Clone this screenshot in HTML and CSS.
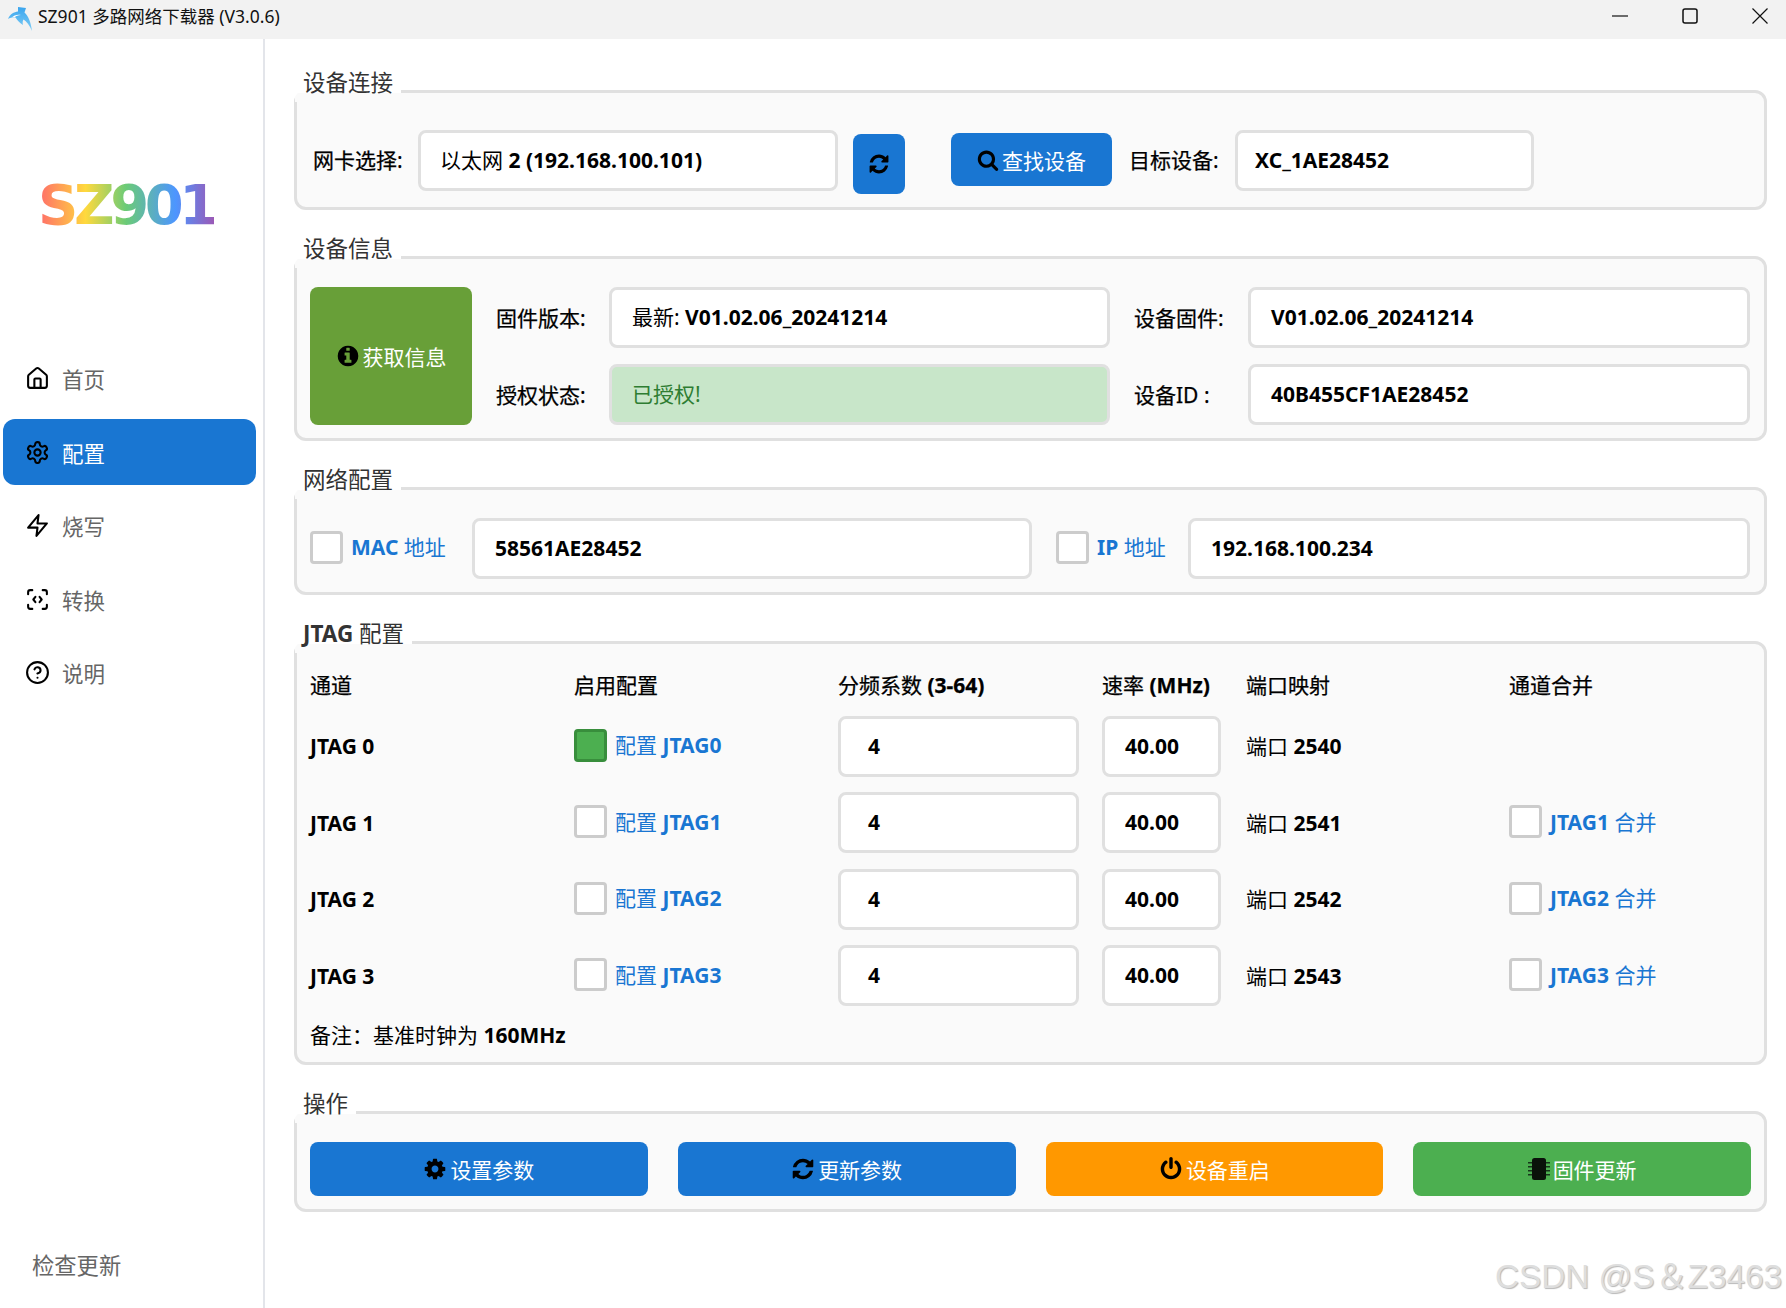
FILE: index.html
```html
<!DOCTYPE html>
<html lang="zh-CN">
<head>
<meta charset="utf-8">
<title>SZ901 多路网络下载器 (V3.0.6)</title>
<link rel="stylesheet" href="styles.css">
</head>
<body>
<div class="window">
  <header class="titlebar">
    <svg class="app-icon" viewBox="0 0 32 32"><defs><linearGradient id="dolphin" x1="0" y1="0" x2="0" y2="1"><stop offset="0" stop-color="#3aa5ee"/><stop offset="1" stop-color="#7fcdf5"/></linearGradient></defs><path fill="url(#dolphin)" d="M6 16C8 11 12 9 16 8.500L16 4L24 5L22.500 9.500C26.500 13 29 20 30 28C27.500 22 24.500 18.500 21.500 16.500C20.500 18 20.500 20 21 22C18 20.500 15.500 17.500 13.500 14.500C11 14 8 15 6 16Z"/><path fill="#fff" d="M9 15c3-3 7-4 10-3-3 0-5 1-6 2-1 0-3 0-4 1z"/></svg>
    <span class="title-text">SZ901 多路网络下载器 (V3.0.6)</span>
    <div class="win-controls">
      <svg class="win-btn" viewBox="0 0 16 16"><path d="M0 8h16" stroke="#111" stroke-width="1.2"/></svg>
      <svg class="win-btn" viewBox="0 0 16 16"><rect x="1" y="1" width="14" height="14" rx="2" fill="none" stroke="#111" stroke-width="1.5"/></svg>
      <svg class="win-btn" viewBox="0 0 16 16"><path d="M.5.5l15 15M15.500.5l-15 15" stroke="#111" stroke-width="1.2"/></svg>
    </div>
  </header>
  <div class="body">
    <aside class="sidebar">
      <div class="logo"><span class="logo-text">SZ901</span></div>
      <nav class="nav">
        <a class="nav-item"><svg class="nav-icon" viewBox="0 0 24 24"><path d="M15 21v-8a1 1 0 0 0-1-1h-4a1 1 0 0 0-1 1v8"/><path d="M3 10a2 2 0 0 1 .709-1.528l7-5.999a2 2 0 0 1 2.582 0l7 5.999A2 2 0 0 1 21 10v9a2 2 0 0 1-2 2H5a2 2 0 0 1-2-2z"/></svg>首页</a>
        <a class="nav-item active"><svg class="nav-icon" viewBox="0 0 24 24"><path d="M12.220 2h-.44a2 2 0 0 0-2 2v.18a2 2 0 0 1-1 1.730l-.43.25a2 2 0 0 1-2 0l-.15-.08a2 2 0 0 0-2.730.73l-.22.38a2 2 0 0 0 .73 2.730l.15.1a2 2 0 0 1 1 1.720v.51a2 2 0 0 1-1 1.740l-.15.09a2 2 0 0 0-.73 2.730l.22.38a2 2 0 0 0 2.730.73l.15-.08a2 2 0 0 1 2 0l.43.25a2 2 0 0 1 1 1.730V20a2 2 0 0 0 2 2h.44a2 2 0 0 0 2-2v-.18a2 2 0 0 1 1-1.730l.43-.25a2 2 0 0 1 2 0l.15.08a2 2 0 0 0 2.730-.73l.22-.39a2 2 0 0 0-.73-2.730l-.15-.08a2 2 0 0 1-1-1.740v-.5a2 2 0 0 1 1-1.740l.15-.09a2 2 0 0 0 .73-2.730l-.22-.38a2 2 0 0 0-2.730-.73l-.15.08a2 2 0 0 1-2 0l-.43-.25a2 2 0 0 1-1-1.730V4a2 2 0 0 0-2-2z"/><circle cx="12" cy="12" r="3"/></svg>配置</a>
        <a class="nav-item"><svg class="nav-icon" viewBox="0 0 24 24"><path d="M13 2 3 14h9l-1 8 10-12h-9l1-8z"/></svg>烧写</a>
        <a class="nav-item"><svg class="nav-icon" viewBox="0 0 24 24"><path d="M3 7V5a2 2 0 0 1 2-2h2M17 3h2a2 2 0 0 1 2 2v2M21 17v2a2 2 0 0 1-2 2h-2M7 21H5a2 2 0 0 1-2-2v-2M10 9.500 8 12l2 2.500M14 9.500l2 2.500-2 2.500"/></svg>转换</a>
        <a class="nav-item"><svg class="nav-icon" viewBox="0 0 24 24"><circle cx="12" cy="12" r="10"/><path d="M9.090 9a3 3 0 0 1 5.830 1c0 2-3 3-3 3M12 17h.01"/></svg>说明</a>
      </nav>
      <div class="check-update">检查更新</div>
    </aside>
    <main class="main">
      <fieldset class="group g-conn">
        <legend>设备连接</legend>
        <div class="conn-row">
          <span class="label lbl-nic">网卡选择:</span>
          <div class="field f-nic"><span class="zh">以太网</span> <b>2 (192.168.100.101)</b></div>
          <button class="btn btn-blue btn-refresh"><svg class="fa" viewBox="0 0 1792 1792"><path d="M1639 1056q0 5-1 7-64 268-268 434.500t-478 166.500q-146 0-282.500-55t-243.500-157l-129 129q-19 19-45 19t-45-19-19-45v-448q0-26 19-45t45-19h448q26 0 45 19t19 45-19 45l-137 137q71 66 161 102t187 36q134 0 250-65t186-179q11-17 53-117 8-23 30-23h192q13 0 22.500 9.500t9.500 22.500zm25-800v448q0 26-19 45t-45 19h-448q-26 0-45-19t-19-45 19-45l138-138q-148-137-349-137-134 0-250 65t-186 179q-11 17-53 117-8 23-30 23h-199q-13 0-22.500-9.500t-9.500-22.500v-7q65-268 270-434.500t480-166.500q146 0 284 55.500t245 156.500l130-129q19-19 45-19t45 19 19 45z"/></svg></button>
          <button class="btn btn-blue btn-find"><svg class="fa" viewBox="0 0 1792 1792"><path d="M1216 832q0-185-131.500-316.500t-316.500-131.500-316.500 131.500-131.500 316.500 131.500 316.500 316.500 131.500 316.500-131.500 131.500-316.500zm512 832q0 52-38 90t-90 38q-54 0-90-38l-343-342q-179 124-399 124-143 0-273.500-55.500t-225-150-150-225-55.500-273.500 55.500-273.500 150-225 225-150 273.500-55.500 273.500 55.500 225 150 150 225 55.500 273.500q0 220-124 399l343 343q37 37 37 90z"/></svg>查找设备</button>
          <span class="label lbl-target">目标设备:</span>
          <div class="field f-target"><b>XC_1AE28452</b></div>
        </div>
      </fieldset>

      <fieldset class="group g-info">
        <legend>设备信息</legend>
        <div class="info-grid">
          <button class="btn btn-olive info-btn"><svg class="fa fa-lg" viewBox="0 0 1792 1792"><path d="M1152 1376v-160q0-14-9-23t-23-9h-96v-512q0-14-9-23t-23-9h-320q-14 0-23 9t-9 23v160q0 14 9 23t23 9h96v320h-96q-14 0-23 9t-9 23v160q0 14 9 23t23 9h448q14 0 23-9t9-23zm-128-896v-160q0-14-9-23t-23-9h-192q-14 0-23 9t-9 23v160q0 14 9 23t23 9h192q14 0 23-9t9-23zm640 416q0 209-103 385.500t-279.500 279.500-385.500 103-385.500-103-279.500-279.500-103-385.500 103-385.500 279.500-279.500 385.500-103 385.500 103 279.500 279.500 103 385.500z"/></svg>获取信息</button>
          <span class="label">固件版本:</span>
          <div class="field"><span class="zh">最新:</span> <b>V01.02.06_20241214</b></div>
          <span class="label">设备固件:</span>
          <div class="field"><b>V01.02.06_20241214</b></div>
          <span class="label">授权状态:</span>
          <div class="field field-ok">已授权!</div>
          <span class="label">设备ID :</span>
          <div class="field"><b>40B455CF1AE28452</b></div>
        </div>
      </fieldset>

      <fieldset class="group g-net">
        <legend>网络配置</legend>
        <div class="net-row">
          <span class="check"></span>
          <span class="check-label l-mac"><b>MAC</b> 地址</span>
          <div class="field"><b>58561AE28452</b></div>
          <span class="check"></span>
          <span class="check-label l-ip"><b>IP</b> 地址</span>
          <div class="field"><b>192.168.100.234</b></div>
        </div>
      </fieldset>

      <fieldset class="group g-jtag">
        <legend><b>JTAG</b> 配置</legend>
        <div class="jtag-grid">
          <span class="th">通道</span><span class="th">启用配置</span><span class="th">分频系数 <b>(3-64)</b></span><span class="th">速率 <b>(MHz)</b></span><span class="th">端口映射</span><span class="th">通道合并</span>

          <b class="name">JTAG 0</b>
          <span class="cell"><span class="check on"></span><span class="check-label">配置 <b>JTAG0</b></span></span>
          <div class="field f-div"><b>4</b></div><div class="field f-rate"><b>40.00</b></div>
          <span class="port">端口 <b>2540</b></span>
          <span class="cell"></span>

          <b class="name">JTAG 1</b>
          <span class="cell"><span class="check"></span><span class="check-label">配置 <b>JTAG1</b></span></span>
          <div class="field f-div"><b>4</b></div><div class="field f-rate"><b>40.00</b></div>
          <span class="port">端口 <b>2541</b></span>
          <span class="cell"><span class="check"></span><span class="check-label"><b>JTAG1</b> 合并</span></span>

          <b class="name">JTAG 2</b>
          <span class="cell"><span class="check"></span><span class="check-label">配置 <b>JTAG2</b></span></span>
          <div class="field f-div"><b>4</b></div><div class="field f-rate"><b>40.00</b></div>
          <span class="port">端口 <b>2542</b></span>
          <span class="cell"><span class="check"></span><span class="check-label"><b>JTAG2</b> 合并</span></span>

          <b class="name">JTAG 3</b>
          <span class="cell"><span class="check"></span><span class="check-label">配置 <b>JTAG3</b></span></span>
          <div class="field f-div"><b>4</b></div><div class="field f-rate"><b>40.00</b></div>
          <span class="port">端口 <b>2543</b></span>
          <span class="cell"><span class="check"></span><span class="check-label"><b>JTAG3</b> 合并</span></span>
        </div>
        <p class="note">备注：基准时钟为 <b>160MHz</b></p>
      </fieldset>

      <fieldset class="group g-ops">
        <legend>操作</legend>
        <div class="ops-row">
          <button class="btn btn-blue"><svg class="fa fa-lg" viewBox="0 0 1792 1792"><path d="M1152 896q0-106-75-181t-181-75-181 75-75 181 75 181 181 75 181-75 75-181zm512-109v222q0 12-8 23t-20 13l-185 28q-19 54-39 91 35 50 107 138 10 12 10 25t-9 23q-27 37-99 108t-94 71q-12 0-26-9l-138-108q-44 23-91 38-16 136-29 186-7 28-36 28h-222q-14 0-24.500-8.500t-11.500-21.500l-28-184q-49-16-90-37l-141 107q-10 9-25 9-14 0-25-11-126-114-165-168-7-10-7-23 0-12 8-23 15-21 51-66.500t54-70.500q-27-50-41-99l-183-27q-13-2-21-12.500t-8-23.500v-222q0-12 8-23t19-13l186-28q14-46 39-92-40-57-107-138-10-12-10-24 0-10 9-23 26-36 98.500-107.500t94.500-71.500q13 0 26 10l138 107q44-23 91-38 16-136 29-186 7-28 36-28h222q14 0 24.500 8.500t11.500 21.500l28 184q49 16 90 37l142-107q9-9 24-9 13 0 25 10 129 119 165 170 7 8 7 22 0 12-8 23-15 21-51 66.500t-54 70.500q26 50 41 98l183 28q13 2 21 12.500t8 23.500z"/></svg>设置参数</button>
          <button class="btn btn-blue"><svg class="fa fa-lg" viewBox="0 0 1792 1792"><path d="M1639 1056q0 5-1 7-64 268-268 434.500t-478 166.500q-146 0-282.500-55t-243.500-157l-129 129q-19 19-45 19t-45-19-19-45v-448q0-26 19-45t45-19h448q26 0 45 19t19 45-19 45l-137 137q71 66 161 102t187 36q134 0 250-65t186-179q11-17 53-117 8-23 30-23h192q13 0 22.500 9.500t9.500 22.500zm25-800v448q0 26-19 45t-45 19h-448q-26 0-45-19t-19-45 19-45l138-138q-148-137-349-137-134 0-250 65t-186 179q-11 17-53 117-8 23-30 23h-199q-13 0-22.500-9.500t-9.500-22.500v-7q65-268 270-434.500t480-166.500q146 0 284 55.500t245 156.500l130-129q19-19 45-19t45 19 19 45z"/></svg>更新参数</button>
          <button class="btn btn-orange"><svg class="fa fa-lg" viewBox="0 0 1792 1792"><path d="M1664 896q0 156-61 298t-164 245-245 164-298 61-298-61-245-164-164-245-61-298q0-182 80.500-343t226.500-270q43-32 95.500-25t83.500 50q32 42 24.500 94.500t-49.500 84.500q-98 74-151.500 181t-53.500 228q0 104 40.500 198.500t109.500 163.500 163.500 109.500 198.500 40.500 198.500-40.500 163.500-109.500 109.500-163.500 40.500-198.500q0-121-53.500-228t-151.500-181q-42-32-49.500-84.500t24.500-94.500q31-43 84-50t95 25q146 109 226.500 270t80.500 343zm-640-768v640q0 52-38 90t-90 38-90-38-38-90v-640q0-52 38-90t90-38 90 38 38 90z"/></svg>设备重启</button>
          <button class="btn btn-green"><svg class="fa" viewBox="0 0 22 22"><rect x="4" y="0" width="14" height="22" rx="2.500" fill="#0a120a"/><path d="M0 4h4v1.500H0zM0 8h4v1.500H0zM0 12h4v1.500H0zM0 16h4v1.500H0zM18 4h4v1.500h-4zM18 8h4v1.500h-4zM18 12h4v1.500h-4zM18 16h4v1.500h-4z" fill="#16351a"/></svg>固件更新</button>
        </div>
      </fieldset>
    </main>
  </div>
  <div class="watermark">CSDN @S＆Z3463</div>
</div>
</body>
</html>
```
FILE: styles.css
```css
* { box-sizing: border-box; }
html, body { margin: 0; padding: 0; background: #fff; }
body { font-family: "Noto Sans", "Noto Sans CJK SC", sans-serif; font-size: 21px; color: #000; }
.window { position: relative; width: 1786px; height: 1308px; overflow: hidden; display: flex; flex-direction: column; }

.titlebar { height: 39px; flex: none; background: #f2f2f2; display: flex; align-items: center; padding-left: 2px; }
.app-icon { width: 32px; height: 32px; margin-top: -2px; margin-right: 4px; flex: none; }
.title-text { font-size: 17.500px; color: #111; padding-bottom: 9px; }
.win-controls { margin-left: auto; display: flex; gap: 54px; padding-right: 18px; padding-bottom: 7px; }
.win-btn { width: 16px; height: 16px; display: block; }

.body { flex: 1; display: flex; min-height: 0; }
.sidebar { width: 265px; flex: none; border-right: 2px solid #e3e5ea; display: flex; flex-direction: column; background: #fff; }
.logo { height: 306.500px; flex: none; display: flex; justify-content: center; padding-top: 133px; padding-right: 11px; }
.logo-text { font-family: "DejaVu Sans", sans-serif; font-weight: 700; font-size: 56px; line-height: 66px; height: 66px; letter-spacing: -4.400px; background: linear-gradient(90deg, #ff6b6b 0%, #ffd93d 27%, #6bcb77 50%, #4d96ff 78%, #9b59b6 100%); -webkit-background-clip: text; background-clip: text; color: transparent; }
.nav { display: flex; flex-direction: column; gap: 7.500px; padding: 0 7px 0 3px; }
.nav-item { height: 66px; border-radius: 12px; display: flex; align-items: center; gap: 12.500px; padding-left: 21.500px; font-size: 21.500px; color: #666; }
.nav-item.active { background: #1976d2; color: #fff; }
.nav-icon { width: 25px; height: 25px; fill: none; stroke: #000; stroke-width: 2; stroke-linecap: round; stroke-linejoin: round; flex: none; }
.check-update { margin-top: auto; padding: 0 0 27px 32px; font-size: 22.300px; color: #666; }

.main { flex: 1; min-width: 0; padding: 41.500px 19px 0 29px; display: flex; flex-direction: column; }
.group { margin: 0 0 37px; min-width: 0; flex: none; border: 3px solid #e0e0e0; border-radius: 12px; background: #fafafa; padding: 0 13px; }
.group legend { position: relative; top: -9px; padding: 0 8px; margin: 0 0 0 -15px; background: #fff; font-size: 22.500px; line-height: 21px; color: #333; }
.zh { font-weight: 400; }
b { font-weight: 700; }

.label { white-space: nowrap; -webkit-text-stroke: 0.25px #000; }
.field { height: 61px; border: 3px solid #e0e0e0; border-radius: 8px; background: #fff; padding-left: 20px; white-space: pre; line-height: 55px; }
.field-ok { background: #c8e6c9; color: #2e7d32; }

.btn { border: 0; border-radius: 8px; font-family: inherit; font-size: 21px; color: #fff; display: flex; align-items: center; justify-content: center; gap: 3px; padding: 0; }
.btn-blue { background: #1976d2; }
.btn-olive { background: #689f38; }
.btn-orange { background: #ff9800; }
.btn-green { background: #4caf50; }
.fa { width: 22px; height: 22px; fill: #000; flex: none; }
.fa-lg { width: 24px; height: 24px; }

.conn-row { display: flex; align-items: flex-start; padding: 28.500px 0 12.500px; }
.conn-row .label { line-height: 61px; }
.lbl-nic { width: 108px; padding-left: 3px; }
.f-nic { width: 420px; padding-left: 19px; }
.btn-refresh { width: 52px; height: 60px; margin: 4px 46px 0 15px; }
.btn-find { width: 161px; height: 53px; margin: 3px 17px 0 0; }
.lbl-target { width: 105.500px; }
.f-target { width: 299px; padding-left: 17.500px; }

.info-grid { display: grid; grid-template-columns: 162px 89px 501px 90px 502px; column-gap: 24px; row-gap: 16px; align-items: center; padding: 19px 0 13px; }
.info-btn { grid-row: span 2; align-self: stretch; }

.net-row { display: flex; align-items: center; padding: 19px 0 13px; }
.net-row .field { flex: none; width: 560px; }
.net-row .field:last-child { width: 562px; }
.net-row .field + .check { margin-left: 24px; }
.check { width: 33px; height: 33px; flex: none; display: block; border: 3px solid #ccc; border-radius: 4px; background: #fff; margin-bottom: 2px; }
.check.on { background: #4caf50; border-color: #388e3c; }
.check-label { color: #1976d2; white-space: pre; margin-left: 8px; line-height: 28px; margin-bottom: 2px; }
.l-mac { width: 121px; }
.l-ip { width: 91px; }

.jtag-grid { display: grid; grid-template-columns: 264px 264px 264px 144px 263px 241px; grid-template-rows: 29px repeat(4, 61px); row-gap: 15.500px; align-items: center; padding-top: 18.500px; }
.jtag-grid .f-div { width: 241px; padding-left: 27px; }
.jtag-grid .f-rate { width: 119px; }
.th { line-height: 29px; white-space: pre; -webkit-text-stroke: 0.25px #000; }
.name { line-height: 28px; }
.cell { display: flex; align-items: center; white-space: pre; }
.port { white-space: pre; line-height: 28px; }
.note { margin: 14.200px 0 0; line-height: 30px; padding-bottom: 12px; }

.ops-row { display: grid; grid-template-columns: repeat(4, 1fr); column-gap: 30px; padding: 19px 0 13px; }
.ops-row .btn { height: 54px; }

.watermark { position: absolute; right: 4px; bottom: 10px; font-family: "Liberation Sans", sans-serif; font-size: 33.300px; color: #dedede; text-shadow: 1px 1px 1px #b8b8b8; white-space: nowrap; }
```
